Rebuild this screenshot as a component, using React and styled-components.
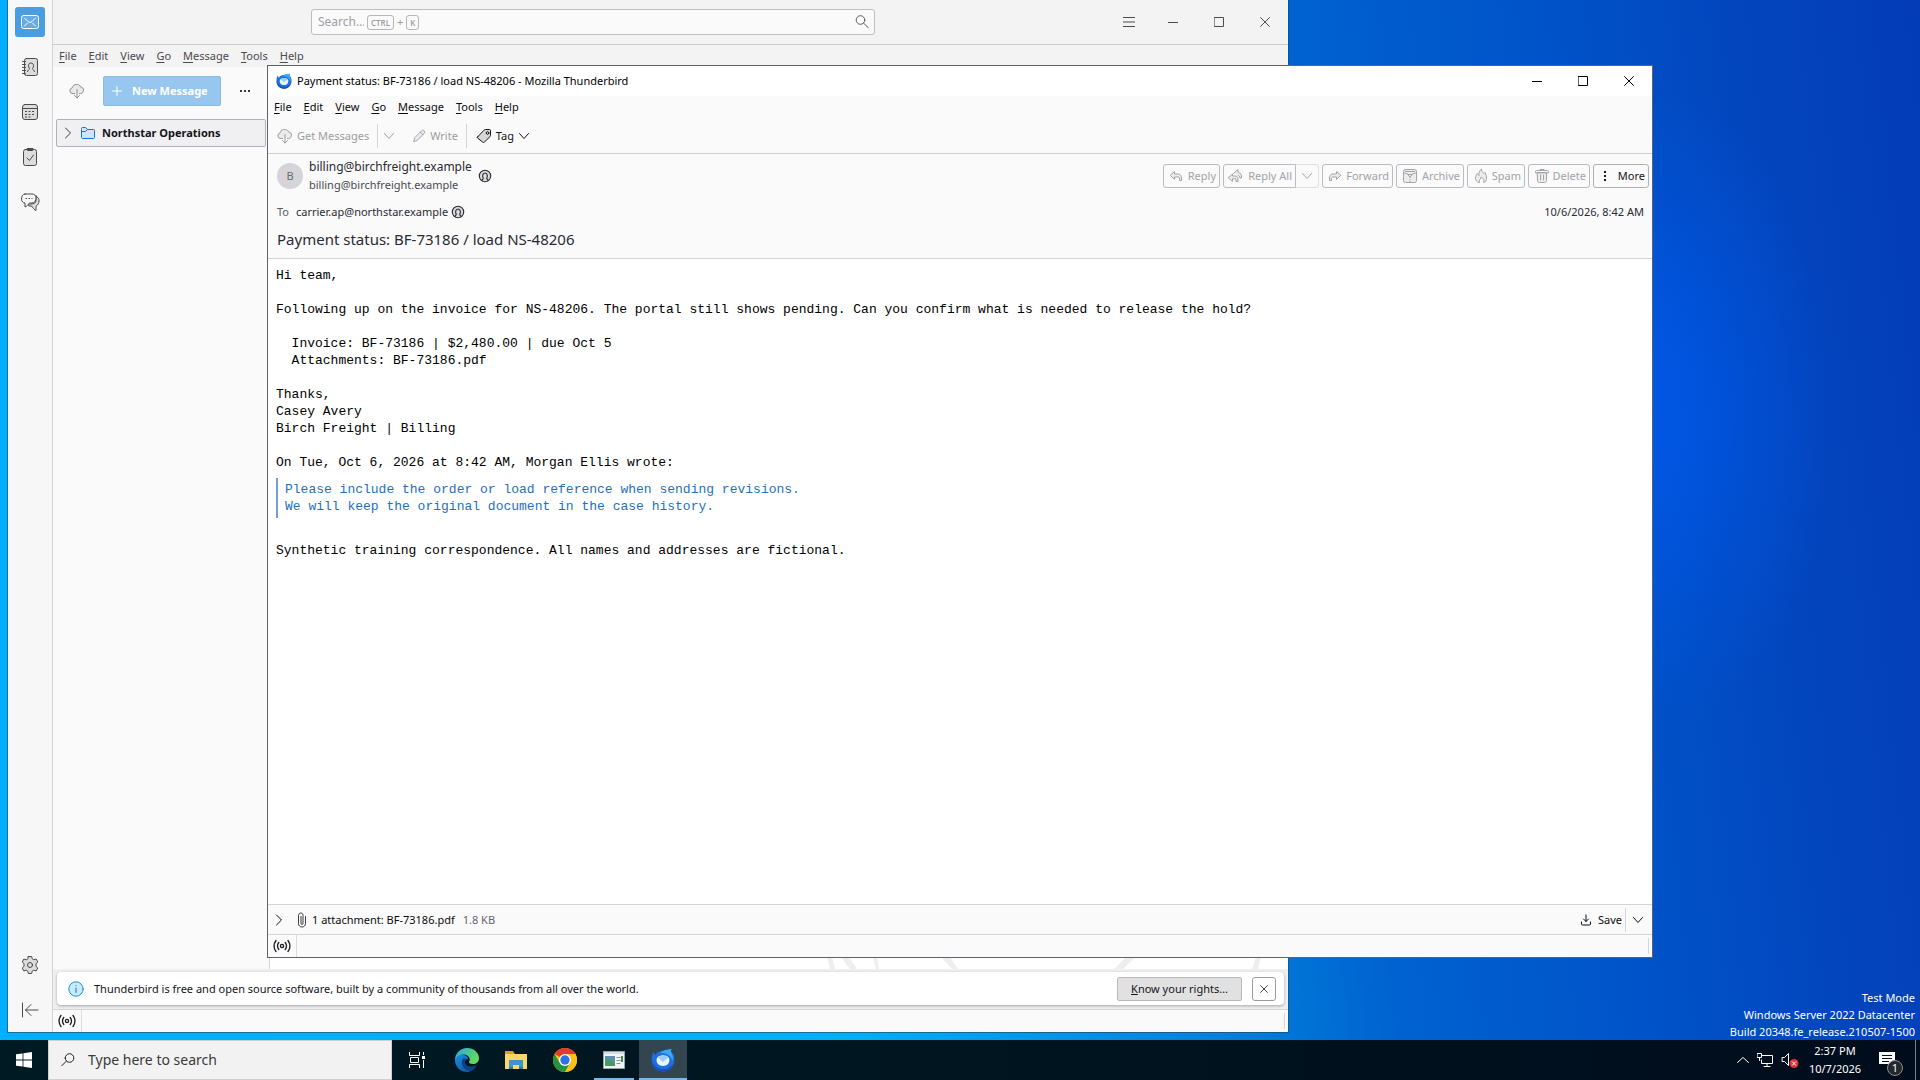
import React from "react";
import styled, { createGlobalStyle, css } from "styled-components";

const Global = createGlobalStyle`
  * { box-sizing: border-box; }
  html, body { margin: 0; height: 100%; overflow: hidden; }
  body, button, input {
    font-family: "Noto Sans", "Open Sans", sans-serif;
    font-size: 11px;
    line-height: 16px;
  }
  button { border: 0; padding: 0; margin: 0; background: none; color: inherit; white-space: nowrap; }
  svg { display: block; flex: none; }
  p, h1, h2, pre, blockquote { margin: 0; font-weight: 400; }
`;

/* ---------- icons ---------- */

const Icon = ({ size = 16, box = 16, children, ...rest }) => (
  <svg width={size} height={size} viewBox={`0 0 ${box} ${box}`} fill="none" stroke="currentColor"
    strokeWidth="1" strokeLinecap="round" strokeLinejoin="round" aria-hidden="true" {...rest}>
    {children}
  </svg>
);
const fade = { fill: "currentColor", fillOpacity: 0.15 };

const MailIcon = () => (
  <Icon size={20} box={20}>
    <rect x="1.5" y="3.5" width="17" height="13" rx="2" {...fade} />
    <path d="M4.5 6 8 9.5Q10 11.5 12 9.5L15.500 6M4.500 14l3-3M15.500 14l-3-3" />
  </Icon>
);
const AddressIcon = () => (
  <Icon size={20} box={20}>
    <rect x="4.500" y="1.500" width="13" height="17" rx="2" {...fade} />
    <path d="M2.500 4.500h3M2.500 7.500h3M2.500 10.500h3M2.500 13.500h3M2.500 16.500h3" />
    <path d="M7.500 14.500c0-1.500 2-1.500 2-3C8 10 8 6 11 6s3 4 1.500 5.500c0 1.500 2 1.500 2 3" />
  </Icon>
);
const CalendarIcon = () => (
  <Icon size={20} box={20}>
    <rect x="2.500" y="2.500" width="15" height="15" rx="2.500" {...fade} />
    <path d="M2.500 6.500h15" />
    <path strokeDasharray="2 1.500" strokeLinecap="butt" d="M5 9.500h10.500M5 12.500h10.500M5 15h7" />
  </Icon>
);
const TasksIcon = () => (
  <Icon size={20} box={20}>
    <rect x="3.500" y="2.500" width="13" height="16" rx="2" {...fade} />
    <path d="M7 2.500V1.500h6v1a1 1 0 0 1-1 1H8a1 1 0 0 1-1-1ZM7 11l2.500 2.500L13.500 8" />
  </Icon>
);
const ChatIcon = () => (
  <Icon size={20} box={20}>
    <path {...fade} d="M17 5c1.500.5 2 2 2 4s-1 4-2.500 4.500c-.5.3-.5 4-.5 5-1.500-.5-3.500-3-4.500-4.500H9l-1-2h3c3 0 5-1 5-4V4Z" />
    <path fill="#f7f7f7" d="M5 2h7c2.500 0 4 1.500 4 4s-1.500 5-4 5H9.500c-1 1.500-3 3.500-4.500 4V11C3 11 1.500 9.500 1.500 7S2.500 2 5 2Z" />
    <path strokeDasharray="1.500 1.500" strokeLinecap="butt" d="M5.500 6.500h7" />
  </Icon>
);
const GearIcon = () => (
  <Icon size={20} box={20}>
    <path {...fade} d="m8.300 1.500h3.400l.5 2.300 1.600 1 2.300-.8 1.700 3-1.800 1.600v2.800l1.800 1.600-1.700 3-2.300-.8-1.600 1-.5 2.300H8.300l-.5-2.300-1.600-1-2.300.8-1.700-3L4 11.400V8.600L2.200 7l1.700-3 2.300.8 1.600-1Z" />
    <circle cx="10" cy="10" r="2.500" />
  </Icon>
);
const CollapseIcon = () => (
  <Icon size={20} box={20}><path d="M2.500 3v14M18 10H5.500M11 4.500 5.500 10l5.500 5.500" /></Icon>
);
const CloudIcon = () => (
  <Icon>
    <path {...fade} d="M5.500 10.500H4A2.800 2.800 0 0 1 3 5C3.500 2.500 6 1 8.500 1.500 10 1.800 11 2.500 11.500 4c2 0 3 1.500 3 3.200s-1.200 3.300-3 3.300h-1" />
    <path d="M8 6.500v8.500M5.500 12.500 8 15l2.500-2.500" />
  </Icon>
);
const PencilIcon = () => (
  <Icon size={14}><path {...fade} d="m2 14 1-4L11 2c1-1 2.500-.5 3 0s1 2 0 3l-8 8ZM9.500 3.500l3 3" /></Icon>
);
const TagIcon = () => (
  <Icon size={16}>
    <path {...fade} d="M1.500 9 8 2.200c.4-.4.800-.7 1.500-.7h4c.6 0 1 .4 1 1v4.800c0 .6-.2 1-.6 1.400L8.500 14c-.6.6-1.500.6-2 0L1.500 10c-.3-.3-.3-.7 0-1Z" />
    <circle cx="11.500" cy="5" r="1.300" />
  </Icon>
);
const ChevronDown = ({ size = 12 }) => <Icon size={size} box={12}><path d="m1.500 3.500 4.500 5 4.500-5" /></Icon>;
const ChevronRight = () => <Icon size={12} box={12}><path d="m3.500 1 5 5-5 5" /></Icon>;
const ChevronUp = () => <Icon size={12} box={12}><path d="m.5 8.500 5.500-5 5.500 5" /></Icon>;
const FolderIcon = () => (
  <Icon size={16}>
    <path stroke="#1373d9" fill="#cfe5fb" d="M1.500 4V3.500c0-.6.4-1 1-1h3.200L7.500 4.500h6c.6 0 1 .4 1 1v7c0 .6-.4 1-1 1h-11c-.6 0-1-.4-1-1Z" />
    <path stroke="#1373d9" d="M1.500 6.500h4l2-2" />
  </Icon>
);
const PersonIcon = () => (
  <Icon size={14} box={14}>
    <circle cx="7" cy="7" r="5.700" {...fade} strokeWidth="1.100" />
    <path strokeWidth="1.100" d="M4 11.500c0-1.300 1.500-1.300 1.300-2.300C4.200 8 4.200 4 7 4s2.800 4 1.700 5.200c-.2 1 1.300 1 1.300 2.300" />
  </Icon>
);
const ReplyIcon = () => (
  <Icon size={14} box={14}><path {...fade} d="M1.500 6 5.500 2.500V5H9c2.500 0 3.500 2 3.500 4v2.500h-2V9.500c0-1-.5-1.500-1.500-1.500H5.500v2Z" /></Icon>
);
const ReplyAllIcon = () => (
  <Icon>
    <path {...fade} d="M1.500 9.500 5.500 6v2h2.500c2 0 3 1.200 3 3v2.500H9V12c0-.8-.4-1.200-1.200-1.200H5.500V13Z" />
    <path {...fade} d="M6.500 5.500 11 1.500v2.500c2.500 1 4 3 3.500 6h-1.500c-.3-1.500-.8-2.300-2-2.800" />
  </Icon>
);
const ForwardIcon = () => (
  <Icon size={14} box={14}><path {...fade} d="M12.500 6 8.500 2.500V5H5C2.500 5 1.500 7 1.500 9v2.500h2V9.500C3.500 8.500 4 8 5 8h3.500v2Z" /></Icon>
);
const ArchiveIcon = () => (
  <Icon>
    <rect x="1.500" y="1.500" width="13" height="13" rx="2" {...fade} />
    <path d="M1.500 5c2 0 3 .5 4.500 1.500h4C11.500 5.500 12.500 5 14.500 5M3.500 3.500h9M6 7l2 2 2-2" />
    <path strokeDasharray="1 1" strokeLinecap="butt" d="M8 9v5.500" />
  </Icon>
);
const SpamIcon = () => (
  <Icon><path {...fade} d="M6 14.500C3.500 14 2.500 12 2.500 10s1-3 1.500-4.500L6 7.500C5.500 5 6.500 2.500 8.500 1c0 2 1 3 2.500 4.500l1-1c1 2 1.500 3.500 1.500 5.500 0 2.500-1 4-3 4.500 1-2 .5-4-2.500-5.500.3 2-2.500 3-2 5.500Z" /></Icon>
);
const TrashIcon = () => (
  <Icon>
    <path {...fade} d="M3.500 4.500h9v8c0 1.200-.8 2-2 2h-5c-1.200 0-2-.8-2-2Z" />
    <path d="M1.500 4.500v-1c0-.6.4-1 1-1h11c.6 0 1 .4 1 1v1ZM6 2.500v-1h4v1M6.500 7v5M9.500 7v5" />
  </Icon>
);
const DotsIcon = () => (
  <Icon size={12} box={12} stroke="none" fill="currentColor"><path d="M5 1h2v2H5zM5 5h2v2H5zM5 9h2v2H5z" /></Icon>
);
const HDotsIcon = () => (
  <Icon size={12} box={12} stroke="none" fill="currentColor"><path d="M1 5h2v2H1zM5 5h2v2H5zM9 5h2v2H9z" /></Icon>
);
const PlusIcon = () => <Icon size={10} box={10}><path d="M5 .5v9M.5 5h9" /></Icon>;
const MenuIcon = () => <Icon size={12} box={12} strokeLinecap="butt"><path d="M0 1.500h12M0 6h12M0 10.500h12" /></Icon>;
const MinimizeIcon = () => <Icon size={10} box={10} strokeLinecap="butt"><path d="M0 5.500h10" /></Icon>;
const MaximizeIcon = () => <Icon size={10} box={10} strokeLinejoin="miter"><path d="M.5.5h9v9h-9z" /></Icon>;
const CloseIcon = ({ size = 10 }) => <Icon size={size} box={10} strokeLinecap="butt"><path d="m.3.3 9.400 9.400M9.700.3.3 9.700" /></Icon>;
const SearchIcon = () => (
  <Icon size={16}><circle cx="6.500" cy="6" r="4.300" /><path d="m9.800 9.300 4.500 4.500" /></Icon>
);
const OnlineIcon = () => (
  <Icon size={18} box={18} strokeWidth="1.300">
    <circle cx="9" cy="9" r="1.600" />
    <path d="M5.800 5.500c-1.500 2-1.500 5 0 7M12.200 5.500c1.500 2 1.500 5 0 7M3 3.500c-2.500 3.500-2.500 7.500 0 11M15 3.500c2.500 3.500 2.500 7.500 0 11" />
  </Icon>
);
const ClipIcon = () => (
  <Icon size={16}><path d="M7 4.500v6.800c0 .7.400 1.200 1 1.200s1-.5 1-1.200V3.500C9 2 8.300 1 7 1S4.500 2 4.500 3.500v8C4.500 13.500 6 15 8 15s3.500-1.500 3.500-3.500v-7" strokeOpacity="0.800" /></Icon>
);
const SaveIcon = () => (
  <Icon size={12} box={12}><path d="M6 1v6.500M3.500 5 6 7.500 8.500 5M1.500 8v2c0 .6.400 1 1 1h7c.6 0 1-.4 1-1V8" /></Icon>
);
const InfoIcon = () => (
  <Icon size={16}>
    <circle cx="8" cy="8" r="7.200" stroke="#1a8fd8" fill="#c9ebff" />
    <path stroke="#1373b9" d="M8 7v4.500M8 4.500v.2" />
  </Icon>
);

const ThunderbirdLogo = ({ size }) => (
  <svg width={size} height={size} viewBox="0 0 24 24" aria-hidden="true">
    <path fill="#1f6fe0" d="M2.500 3.500C3 6 4 7 4 7 6.500 3.500 10 2.500 13 2.500L21 1c-1 1-1 2-.5 3C23.500 7 24 11 23 15c-1.500 5-5.500 8.500-11 8.500S2 20 1 15C.3 11 .8 7 2.500 3.500Z" />
    <path fill="#38a9f5" d="M9 5c3-3 7-3.500 12-4-1.500 1-1.500 2-1 3 2 3 2.500 6 1.500 9C20 8 16 4.500 9 5Z" />
    <path fill="#1450b8" d="M1 12c1 4 4 8 9 9s9-1 12-5c-1.500 5-5.500 7.500-10 7.500C6 23.500 1 19 1 12Z" />
    <path fill="#e8f4ff" d="M6 10c2-3 9-4 12 0 1.500 4-1 8-6 8s-7.500-4-6-8Z" />
    <path fill="#9ccdf7" d="M7 9.500 12 14l5.500-4.500C15 7 9.500 7 7 9.500Z" />
  </svg>
);
const WindowsLogo = () => (
  <svg width="16" height="16" viewBox="0 0 16 16" fill="#fff" aria-hidden="true">
    <path d="M0 2.300 6.600 1.400v6.200H0zM7.400 1.300 16 0v7.600H7.400zM0 8.400h6.600v6.200L0 13.700zM7.400 8.400H16V16l-8.600-1.300z" />
  </svg>
);
const TaskViewIcon = () => (
  <svg width="18" height="18" viewBox="0 0 18 18" fill="none" stroke="#fff" aria-hidden="true">
    <path d="M1.500 1v3.500h10V1M1.500 17v-3.500h10V17M2.500 6.500h8v5h-8zM15.500 1v3M15.500 9v8" />
    <path fill="#fff" stroke="none" d="M14 5h3v3h-3z" />
  </svg>
);
const EdgeLogo = () => (
  <svg width="24" height="24" viewBox="0 0 24 24" aria-hidden="true">
    <defs>
      <linearGradient id="edgeTop" x1="0" y1="0" x2="1" y2="0.4"><stop offset="0" stopColor="#2aa6e8" /><stop offset="1" stopColor="#5fdc5a" /></linearGradient>
      <linearGradient id="edgeBase" x1="0" y1="0" x2="1" y2="1"><stop offset="0" stopColor="#1b8fe0" /><stop offset="1" stopColor="#0c4a92" /></linearGradient>
    </defs>
    <path fill="url(#edgeBase)" d="M0 12C0 8 4 6 8 6.500c3 .5 5 2.500 5 4.500-2 0-3.500 2-3 4 1 4 7 5 11.500 2.500C19.500 21.500 16 24 12 24 5 24 0 18.500 0 12Z" />
    <path fill="url(#edgeTop)" d="M0 12C0 5 5.500 0 12 0c7 0 12 5 12 10 0 4-3 6-6 6-2.500 0-4.500-1-4-2 2-3 0-7-5-7.500C4.500 6 1 8.500 0 12Z" />
    <path fill="#0b3f86" d="M8 11c-3 4 0 11 7 12 3-1 5-3 6.500-5.500-5 2.500-10.500 1.500-11.500-2.500-.4-1.600.3-3 1.500-3.700C10.500 10.500 9 10.200 8 11Z" />
  </svg>
);
const ExplorerLogo = () => (
  <svg width="24" height="24" viewBox="0 0 24 24" aria-hidden="true">
    <path fill="#dba320" d="M1 3h8l2 3v4H1z" /><path fill="#fbd765" d="M1 6h22v15H1z" />
    <path fill="#3e93d0" d="M5 12h14v9h-4v-4H9v4H5z" /><path fill="#2b76b2" d="M5 19h4v2H5zM15 19h4v2h-4z" />
  </svg>
);
const ChromeLogo = () => (
  <svg width="24" height="24" viewBox="0 0 24 24" aria-hidden="true">
    <circle cx="12" cy="12" r="12" fill="#fbc116" />
    <path fill="#e33b2e" d="M12 12 1.600 6A12 12 0 0 1 22.400 6H12Z" />
    <path fill="#229342" d="M1.600 6A12 12 0 0 0 12 24l5.200-9L12 12 6.800 15Z" />
    <path fill="#fbc116" d="M12 6h10.400A12 12 0 0 1 12 24l5.200-9Z" />
    <circle cx="12" cy="12" r="6" fill="#fff" /><circle cx="12" cy="12" r="4.700" fill="#2a74e8" />
  </svg>
);
const ServerLogo = () => (
  <svg width="24" height="24" viewBox="0 0 24 24" aria-hidden="true">
    <path fill="#f4f4f4" stroke="#9aa3a8" d="M1.500 3.500h21v17h-21z" /><path fill="#d5dde2" d="M2 4h20v2H2z" />
    <path fill="#5b8fb0" d="M3 8h10v10H3z" /><path fill="#4a9a5c" d="M3 12c3-2 6 0 10 4v2H3z" />
    <path stroke="#8a9499" d="M14.500 9.500h4M14.500 12.500h4M14.500 15.500h4" /><path fill="#3a8f4a" d="M19 8h2v6h-2z" />
  </svg>
);
const NetworkIcon = () => (
  <Icon size={16} strokeLinejoin="miter"><path d="M5.500 3.500h10v8h-11V8M10 11.500v3M7 14.500h6M.5 1.500h4v4h-4zM2.500 5.500v3" /></Icon>
);
const SpeakerIcon = () => (
  <Icon size={18} box={18}>
    <path strokeLinejoin="miter" d="M1.500 6.500h2l4-4v12l-4-4h-2z" />
    <circle cx="13" cy="12.500" r="4.500" fill="#d8343c" stroke="none" /><path d="m11.300 10.800 3.400 3.400M14.700 10.800l-3.400 3.400" />
  </Icon>
);
const NoticeIcon = () => <svg width="16" height="16" viewBox="0 0 16 16" aria-hidden="true"><path fill="#fff" d="M0 0h16v12h-3v3l-4-3H0z" /><path stroke="#000e1e" d="M3 3.500h10M3 6.500h10M3 9.500h7" /></svg>;

/* ---------- desktop ---------- */

const Screen = styled.div`
  height: 100vh;
  display: flex;
  flex-direction: column;
  background:
    radial-gradient(ellipse 11% 30% at 85% 38%, rgba(0, 88, 236, 0.9), rgba(0, 80, 216, 0)),
    linear-gradient(84deg, #00b0ff 0%, #00aef8 42%, #0078d8 63%, #0062d0 69%, #0052c8 82%, #0344bc 92%, #033cb6 100%);
`;
const Desktop = styled.main`
  flex: 1;
  min-height: 0;
  position: relative;
`;
const BuildLabel = styled.p`
  position: absolute;
  right: 5px;
  bottom: 0;
  color: #fff;
  line-height: 17px;
  text-align: right;
`;

/* ---------- shared window parts ---------- */

const MainWindow = styled.section`
  position: absolute;
  inset: 0 calc(100% / 3 - 8px) 8px 8px;
  display: flex;
  background: #f3f3f3;
  color: #4a4a4f;
  box-shadow: 0 0 0 1px rgba(30, 70, 90, 0.6);
`;
const MessageWindow = styled.section`
  position: absolute;
  inset: 65px 267px 82px;
  display: flex;
  flex-direction: column;
  background: #fafafa;
  border: 1px solid #5f6368;
  color: #0c0c0d;
`;
const WindowColumn = styled.div`
  flex: 1;
  min-width: 0;
  display: flex;
  flex-direction: column;
`;
const Menubar = styled.nav`
  display: flex;
  height: 22px;
`;
const MenuButton = styled.button`
  padding: 0 6px;
  u { text-underline-offset: 2px; }
`;
const WindowControls = styled.div`
  display: flex;
  align-self: stretch;
`;
const ControlButton = styled.button`
  width: 46px;
  display: grid;
  place-items: center;
`;
const AppMenuButton = styled(ControlButton)`
  width: 42px;
`;
const StatusBar = styled.footer`
  height: 23px;
  flex: none;
  display: flex;
  align-items: center;
  justify-content: space-between;
  border-top: 1px solid #d5d5d8;
  background: #fafafa;
  color: #1c1c20;
  padding-right: 3px;
`;
const OnlineCell = styled.button`
  align-self: stretch;
  width: 29px;
  display: grid;
  place-items: center;
  border-right: 1px solid #dcdcdf;
`;
const Grip = styled.span`
  width: 1px;
  height: 16px;
  background: #d5d5d8;
`;
const menus = ["File", "Edit", "View", "Go", "Message", "Tools", "Help"];
const Menus = () => (
  <Menubar aria-label="Menu bar">
    {menus.map((m) => <MenuButton key={m}><u>{m[0]}</u>{m.slice(1)}</MenuButton>)}
  </Menubar>
);
const Controls = () => (
  <>
    <ControlButton aria-label="Minimize"><MinimizeIcon /></ControlButton>
    <ControlButton aria-label="Maximize"><MaximizeIcon /></ControlButton>
    <ControlButton aria-label="Close"><CloseIcon /></ControlButton>
  </>
);
const Status = () => (
  <StatusBar>
    <OnlineCell aria-label="Online status"><OnlineIcon /></OnlineCell>
    <Grip />
  </StatusBar>
);

/* ---------- main window ---------- */

const Spaces = styled.nav`
  width: 45px;
  flex: none;
  display: flex;
  flex-direction: column;
  align-items: center;
  gap: 15px;
  padding: 7px 0;
  background: #f7f7f7;
  border-right: 1px solid #d3d3d7;
`;
const SpaceButton = styled.button`
  width: 30px;
  height: 30px;
  display: grid;
  place-items: center;
  border-radius: 3px;
  ${(p) => p.$active && css`background: #4a9de0; color: #fff;`}
  ${(p) => p.$bottom && css`margin-top: auto;`}
`;
const TopBar = styled.header`
  height: 45px;
  flex: none;
  display: grid;
  grid-template-columns: 258fr 564fr 233fr auto;
  align-items: center;
  border-bottom: 1px solid #cbcdd0;
`;
const SearchBox = styled.label`
  grid-column: 2;
  height: 26px;
  display: flex;
  align-items: center;
  gap: 3px;
  padding: 0 4px 0 6px;
  background: #fafafa;
  border: 1px solid #bdbdc2;
  border-radius: 3px;
  color: #9b9ba0;
  svg { margin-left: auto; color: #5b5b60; }
`;
const SearchInput = styled.input`
  width: 46px;
  padding: 0;
  border: 0;
  outline: 0;
  background: none;
  font-size: 12px;
  &::placeholder { color: #a0a0a5; opacity: 1; }
`;
const Key = styled.kbd`
  padding: 0 3px;
  border: 1px solid #b5b5ba;
  border-radius: 3px;
  font: 600 8px/13px "Open Sans", sans-serif;
`;
const TopControls = styled(WindowControls)`
  grid-column: 4;
  padding-bottom: 1px;
`;
const Panes = styled.div`
  flex: 1;
  min-height: 0;
  display: flex;
  background: #fff;
`;
const FolderPane = styled.aside`
  width: 217px;
  flex: none;
  background: #fafafa;
  border-right: 1px solid #d5d5d8;
`;
const FolderToolbar = styled.div`
  height: 48px;
  display: flex;
  align-items: center;
  justify-content: space-between;
  padding: 0 18px 0 16px;
  color: #909095;
`;
const NewMessageButton = styled.button`
  width: 118px;
  height: 30px;
  display: flex;
  align-items: center;
  gap: 10px;
  padding-left: 8px;
  background: #97c6ee;
  border: 1px solid #8dbce3;
  border-radius: 2px;
  color: #fff;
  font-weight: 700;
`;
const MoreDots = styled.button`
  color: #3a3a3f;
`;
const FolderRow = styled.button`
  width: calc(100% - 6px);
  height: 28px;
  margin: 4px 3px;
  display: flex;
  align-items: center;
  gap: 6px;
  padding-left: 5px;
  background: #f0f0f2;
  border: 1px solid #b1b1bb;
  border-radius: 2px;
  color: #15141a;
  font-weight: 700;
  svg:first-child { color: #3a3a3f; }
`;
const StartPage = styled.div`
  flex: 1;
  min-width: 0;
  display: flex;
  align-items: flex-end;
  justify-content: flex-end;
  overflow: hidden;
`;
const NoticeArea = styled.div`
  height: 40px;
  flex: none;
  padding: 3px 4px;
  background: #f0f0f2;
`;
const NoticeCard = styled.div`
  height: 33px;
  display: flex;
  align-items: center;
  gap: 10px;
  padding: 0 8px 0 11px;
  background: #fff;
  border-radius: 4px;
  box-shadow: 0 1px 3px rgba(50, 50, 60, 0.4);
  color: #15141a;
`;
const NoticeText = styled.p`
  flex: 1;
`;
const RightsButton = styled.button`
  width: 125px;
  height: 24px;
  background: #e1e1e2;
  border: 1px solid #b9b9bd;
  border-radius: 2px;
`;
const DismissButton = styled.button`
  width: 24px;
  height: 24px;
  display: grid;
  place-items: center;
  border: 1px solid #9a9aa0;
  border-radius: 3px;
`;

/* ---------- message window ---------- */

const TitleBar = styled.header`
  height: 30px;
  flex: none;
  display: flex;
  align-items: center;
  justify-content: space-between;
  padding-left: 8px;
  background: #fff;
  color: #000;
`;
const TitleText = styled.h1`
  display: flex;
  align-items: center;
  gap: 5px;
  font-size: 11px;
`;
const Toolbar = styled.div`
  height: 36px;
  flex: none;
  display: flex;
  align-items: center;
  border-bottom: 1px solid #cfcfd3;
`;
const ToolButton = styled.button`
  display: flex;
  align-items: center;
  gap: 4px;
  padding: 0 8px 0 ${(p) => (p.$tight ? 5 : 9)}px;
  color: ${(p) => (p.disabled ? "#9d9da1" : "#15141a")};
`;
const Divider = styled.span`
  width: 1px;
  height: 24px;
  background: #d5d5d8;
`;
const MessageHeader = styled.section`
  flex: none;
  display: flex;
  flex-direction: column;
  height: 105px;
  padding: 1px 8px 0 9px;
  border-bottom: 1px solid #d5d5d8;
  color: #2a2a33;
`;
const HeaderRow = styled.div`
  display: flex;
  align-items: center;
  justify-content: space-between;
  height: ${(p) => p.$height}px;
`;
const SenderBlock = styled.div`
  display: flex;
  align-items: center;
  gap: 6px;
`;
const Avatar = styled.span`
  width: 26px;
  height: 26px;
  display: grid;
  place-items: center;
  border-radius: 50%;
  background: #d4d4d9;
  color: #6a6a72;
`;
const SenderLines = styled.div`
  display: flex;
  flex-direction: column;
`;
const SenderName = styled.strong`
  font-size: 12px;
  font-weight: 400;
  line-height: 18px;
`;
const SenderAddress = styled.span`
  line-height: 18px;
  color: #4a4a52;
`;
const PersonButton = styled.button`
  color: #2a2a33;
`;
const Actions = styled.div`
  display: flex;
  gap: 3px;
  margin-right: -5px;
`;
const ActionButton = styled.button`
  width: ${(p) => p.$width}px;
  height: 24px;
  display: flex;
  align-items: center;
  justify-content: space-between;
  padding: 0 3px 0 ${(p) => p.$inset || 5}px;
  border: 1px solid ${(p) => (p.$strong ? "#b0b0b5" : "#bcbcc0")};
  border-radius: 3px;
  color: ${(p) => (p.$strong ? "#15141a" : "#a3a4a8")};
`;
const SplitButton = styled.div`
  display: flex;
  ${ActionButton}:first-child { border-radius: 3px 0 0 3px; }
`;
const SplitArrow = styled.button`
  width: 23px;
  display: grid;
  place-items: center;
  border: 1px solid #e0e0e3;
  border-left: 0;
  border-radius: 0 3px 3px 0;
  color: #a3a4a8;
`;
const Recipient = styled.div`
  display: flex;
  align-items: center;
  gap: 3px;
  span:first-child { width: 16px; color: #5b5b66; }
`;
const Subject = styled.h2`
  font-size: 15px;
  line-height: 24px;
`;
const Body = styled.article`
  flex: 1;
  min-height: 0;
  padding: 8px;
  background: #fff;
  color: #000;
`;
const Plain = styled.pre`
  font: 13px/17px "Liberation Mono", monospace;
`;
const Quote = styled.blockquote`
  margin: 7px 0;
  padding: 3px 0 3px 7px;
  border-left: 2px solid #729fcf;
  color: #1f6fc0;
`;
const AttachmentBar = styled.div`
  height: 30px;
  flex: none;
  display: flex;
  align-items: center;
  justify-content: space-between;
  padding-right: 8px;
  border-top: 1px solid #d5d5d8;
`;
const AttachmentInfo = styled.div`
  display: flex;
  align-items: center;
  padding-left: 5px;
`;
const AttachmentName = styled.span`
  padding: 0 8px 0 2px;
`;
const AttachmentSize = styled.span`
  color: #65656e;
`;
const Expander = styled.button`
  padding-right: 9px;
`;
const SaveGroup = styled.div`
  display: flex;
  align-items: center;
  gap: 3px;
`;
const SaveButton = styled.button`
  display: flex;
  align-items: center;
  gap: 6px;
`;
const SaveArrow = styled.button`
  padding-left: 3px;
`;

/* ---------- taskbar ---------- */

const Taskbar = styled.footer`
  height: 40px;
  flex: none;
  display: flex;
  background: linear-gradient(90deg, #001a24, #00151f 50%, #000c1c);
  color: #fff;
`;
const StartButton = styled.button`
  width: 48px;
  display: grid;
  place-items: center;
`;
const TaskSearch = styled.label`
  width: 344px;
  display: flex;
  align-items: center;
  gap: 12px;
  padding-left: 11px;
  background: #f2f2f2;
  border: 1px solid #cfcfcf;
  color: #222;
  svg { transform: scaleX(-1); }
  input {
    flex: 1;
    min-width: 0;
    border: 0;
    padding: 0;
    outline: 0;
    background: none;
    font-size: 14px;
    line-height: 20px;
  }
  input::placeholder { color: #3a3a3a; opacity: 1; }
`;
const TaskItems = styled.div`
  flex: 1;
  display: flex;
  gap: 1px;
`;
const TaskButton = styled.button`
  width: 48px;
  display: grid;
  place-items: center;
  &:first-child { width: 50px; }
  ${(p) => p.$open && css`
    background: linear-gradient(#76b9ed, #76b9ed) center bottom / 40px 2px no-repeat;
  `}
  ${(p) => p.$active && css`
    background: #33454f;
    box-shadow: inset 0 -2px #76b9ed;
  `}
`;
const Tray = styled.div`
  display: flex;
  align-items: center;
  gap: 8px;
`;
const TrayButton = styled.button`
  display: grid;
  place-items: center;
`;
const Clock = styled.time`
  width: 56px;
  text-align: center;
  line-height: 18px;
`;
const NoticeButton = styled.button`
  position: relative;
  width: 32px;
  height: 32px;
  display: grid;
  place-items: center;
  margin-right: 4px;
`;
const Badge = styled.span`
  position: absolute;
  right: 0;
  bottom: 0;
  width: 16px;
  height: 16px;
  border: 1px solid #8a8f96;
  border-radius: 50%;
  background: #23272e;
  line-height: 14px;
  text-align: center;
`;
const ShowDesktop = styled.button`
  align-self: stretch;
  width: 5px;
  border-left: 1px solid #7a808a;
`;

const Thunderbird = () => (
  <MainWindow>
    <Spaces aria-label="Spaces">
      <SpaceButton $active aria-label="Mail"><MailIcon /></SpaceButton>
      <SpaceButton aria-label="Address Book"><AddressIcon /></SpaceButton>
      <SpaceButton aria-label="Calendar"><CalendarIcon /></SpaceButton>
      <SpaceButton aria-label="Tasks"><TasksIcon /></SpaceButton>
      <SpaceButton aria-label="Chat"><ChatIcon /></SpaceButton>
      <SpaceButton $bottom aria-label="Settings"><GearIcon /></SpaceButton>
      <SpaceButton aria-label="Collapse"><CollapseIcon /></SpaceButton>
    </Spaces>
    <WindowColumn>
      <TopBar>
        <SearchBox>
          <SearchInput placeholder="Search…" aria-label="Search" />
          <Key>CTRL</Key>+<Key>K</Key>
          <SearchIcon />
        </SearchBox>
        <TopControls>
          <AppMenuButton aria-label="Application menu"><MenuIcon /></AppMenuButton>
          <Controls />
        </TopControls>
      </TopBar>
      <Menus />
      <Panes>
        <FolderPane>
          <FolderToolbar>
            <CloudIcon />
            <NewMessageButton><PlusIcon />New Message</NewMessageButton>
            <MoreDots aria-label="Folder options"><HDotsIcon /></MoreDots>
          </FolderToolbar>
          <FolderRow><ChevronRight /><FolderIcon />Northstar Operations</FolderRow>
        </FolderPane>
        <StartPage>
          <svg width="462" height="12" viewBox="0 0 462 12" fill="#eeeef0" aria-hidden="true">
            <path d="M1 0h5l3 12H4zM15 0h8l8 12h-7zM47 0h4l2 12h-3zM115 0h9l8 12h-6zM300 0h9l-12 12h-9zM430 0h5l-3 12h-6z" />
          </svg>
        </StartPage>
      </Panes>
      <NoticeArea>
        <NoticeCard>
          <InfoIcon />
          <NoticeText>Thunderbird is free and open source software, built by a community of thousands from all over the world.</NoticeText>
          <RightsButton><u>K</u>now your rights…</RightsButton>
          <DismissButton aria-label="Dismiss"><CloseIcon size={8} /></DismissButton>
        </NoticeCard>
      </NoticeArea>
      <Status />
    </WindowColumn>
  </MainWindow>
);

const Message = () => (
  <MessageWindow>
    <TitleBar>
      <TitleText><ThunderbirdLogo size={16} />Payment status: BF-73186 / load NS-48206 - Mozilla Thunderbird</TitleText>
      <WindowControls><Controls /></WindowControls>
    </TitleBar>
    <Menus />
    <Toolbar>
      <ToolButton disabled><CloudIcon />Get Messages</ToolButton>
      <Divider />
      <ToolButton disabled $tight aria-label="Get messages options"><ChevronDown /></ToolButton>
      <ToolButton disabled><PencilIcon />Write</ToolButton>
      <Divider />
      <ToolButton><TagIcon />Tag<ChevronDown /></ToolButton>
    </Toolbar>
    <MessageHeader>
      <HeaderRow $height={42}>
        <SenderBlock>
          <Avatar>B</Avatar>
          <SenderLines>
            <SenderName>billing@birchfreight.example</SenderName>
            <SenderAddress>billing@birchfreight.example</SenderAddress>
          </SenderLines>
          <PersonButton aria-label="Add sender to address book"><PersonIcon /></PersonButton>
        </SenderBlock>
        <Actions>
          <ActionButton $width={57}><ReplyIcon />Reply</ActionButton>
          <SplitButton>
            <ActionButton $width={73} $inset={3}><ReplyAllIcon />Reply All</ActionButton>
            <SplitArrow aria-label="Reply options"><ChevronDown /></SplitArrow>
          </SplitButton>
          <ActionButton $width={71}><ForwardIcon />Forward</ActionButton>
          <ActionButton $width={68}><ArchiveIcon />Archive</ActionButton>
          <ActionButton $width={58}><SpamIcon />Spam</ActionButton>
          <ActionButton $width={62}><TrashIcon />Delete</ActionButton>
          <ActionButton $width={56} $strong><DotsIcon />More</ActionButton>
        </Actions>
      </HeaderRow>
      <HeaderRow $height={30}>
        <Recipient>
          <span>To</span><span>carrier.ap@northstar.example</span>
          <PersonButton aria-label="Add recipient to address book"><PersonIcon /></PersonButton>
        </Recipient>
        <time>10/6/2026, 8:42 AM</time>
      </HeaderRow>
      <Subject>Payment status: BF-73186 / load NS-48206</Subject>
    </MessageHeader>
    <Body>
      <Plain>{`Hi team,

Following up on the invoice for NS-48206. The portal still shows pending. Can you confirm what is needed to release the hold?

  Invoice: BF-73186 | $2,480.00 | due Oct 5
  Attachments: BF-73186.pdf

Thanks,
Casey Avery
Birch Freight | Billing

On Tue, Oct 6, 2026 at 8:42 AM, Morgan Ellis wrote:`}</Plain>
      <Quote>
        <Plain>{`Please include the order or load reference when sending revisions.
We will keep the original document in the case history.`}</Plain>
      </Quote>
      <Plain>{` 
Synthetic training correspondence. All names and addresses are fictional.`}</Plain>
    </Body>
    <AttachmentBar>
      <AttachmentInfo>
        <Expander aria-label="Show attachments"><ChevronRight /></Expander>
        <ClipIcon />
        <AttachmentName>1 attachment: BF-73186.pdf</AttachmentName>
        <AttachmentSize>1.8 KB</AttachmentSize>
      </AttachmentInfo>
      <SaveGroup>
        <SaveButton><SaveIcon />Save</SaveButton>
        <Divider />
        <SaveArrow aria-label="Save options"><ChevronDown /></SaveArrow>
      </SaveGroup>
    </AttachmentBar>
    <Status />
  </MessageWindow>
);

export default function App() {
  return (
    <>
      <Global />
      <Screen>
        <Desktop>
          <BuildLabel>Test Mode<br />Windows Server 2022 Datacenter<br />Build 20348.fe_release.210507-1500</BuildLabel>
          <Thunderbird />
          <Message />
        </Desktop>
        <Taskbar>
          <StartButton aria-label="Start"><WindowsLogo /></StartButton>
          <TaskSearch>
            <SearchIcon />
            <input placeholder="Type here to search" aria-label="Type here to search" />
          </TaskSearch>
          <TaskItems>
            <TaskButton aria-label="Task View"><TaskViewIcon /></TaskButton>
            <TaskButton aria-label="Microsoft Edge"><EdgeLogo /></TaskButton>
            <TaskButton aria-label="File Explorer"><ExplorerLogo /></TaskButton>
            <TaskButton aria-label="Google Chrome"><ChromeLogo /></TaskButton>
            <TaskButton $open aria-label="Server Manager"><ServerLogo /></TaskButton>
            <TaskButton $active aria-label="Thunderbird"><ThunderbirdLogo size={24} /></TaskButton>
          </TaskItems>
          <Tray>
            <TrayButton aria-label="Show hidden icons"><ChevronUp /></TrayButton>
            <TrayButton aria-label="Network"><NetworkIcon /></TrayButton>
            <TrayButton aria-label="Volume"><SpeakerIcon /></TrayButton>
            <Clock>2:37 PM<br />10/7/2026</Clock>
            <NoticeButton aria-label="Notifications"><NoticeIcon /><Badge>1</Badge></NoticeButton>
            <ShowDesktop aria-label="Show desktop" />
          </Tray>
        </Taskbar>
      </Screen>
    </>
  );
}
